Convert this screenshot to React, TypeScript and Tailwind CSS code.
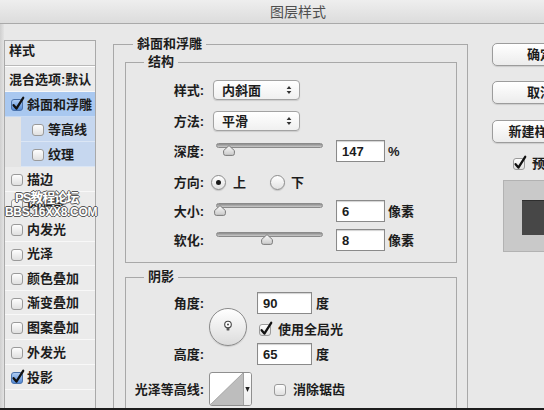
import React from 'react';

type Effect = {
  label: string;
  h: string;
  checked?: boolean;
  selected?: boolean;
  sub?: boolean;
};

const effects: Effect[] = [
  { label: '斜面和浮雕', h: 'h-[25px]', checked: true, selected: true },
  { label: '等高线', h: 'h-[25px]', sub: true },
  { label: '纹理', h: 'h-[25px]', sub: true },
  { label: '描边', h: 'h-[25px]' },
  { label: '内阴影', h: 'h-[25px]' },
  { label: '内发光', h: 'h-[25px]' },
  { label: '光泽', h: 'h-[24px]' },
  { label: '颜色叠加', h: 'h-[25px]' },
  { label: '渐变叠加', h: 'h-[24px]' },
  { label: '图案叠加', h: 'h-[25px]' },
  { label: '外发光', h: 'h-[25px]' },
  { label: '投影', h: 'h-[25px]', checked: true },
];

function Check({ checked = false, blue = false }: { checked?: boolean; blue?: boolean }) {
  return (
    <svg width="16" height="16" viewBox="0 0 16 16" className="shrink-0 overflow-visible">
      <defs>
        <linearGradient id="cb-plain" x1="0" y1="0" x2="0" y2="1">
          <stop offset="0" stopColor="#ffffff" />
          <stop offset="1" stopColor="#dedede" />
        </linearGradient>
        <linearGradient id="cb-blue" x1="0" y1="0" x2="0" y2="1">
          <stop offset="0" stopColor="#b3d0f5" />
          <stop offset="1" stopColor="#4f86d4" />
        </linearGradient>
      </defs>
      <rect
        x="1.5"
        y="3.5"
        width="11"
        height="11"
        rx="2.5"
        fill={blue ? 'url(#cb-blue)' : 'url(#cb-plain)'}
        stroke={blue ? '#4a72ab' : '#9a9a9a'}
      />
      {checked && (
        <path
          d="M3.6 9.2 L6.4 12.6 L13.2 1.8"
          fill="none"
          stroke="#111"
          strokeWidth="2.3"
          strokeLinecap="round"
          strokeLinejoin="round"
        />
      )}
    </svg>
  );
}

function Radio({ on = false }: { on?: boolean }) {
  return (
    <span className="flex h-[15px] w-[15px] shrink-0 items-center justify-center rounded-full border border-[#8c8c8c] bg-linear-to-b from-white to-[#e2e2e2] shadow-[0_1px_1px_rgba(0,0,0,0.15)]">
      {on && <span className="h-[5px] w-[5px] rounded-full bg-[#1a1a1a]" />}
    </span>
  );
}

function Select({ value }: { value: string }) {
  return (
    <div className="ml-[4px] flex h-[20px] w-[87px] items-center justify-between rounded-[4px] border border-[#a3a3a3] bg-linear-to-b from-white to-[#f0f0f0] pl-[8px] pr-[7px] shadow-[0_1px_1px_rgba(0,0,0,0.12)]">
      <span className="font-bold">{value}</span>
      <svg width="6" height="10" viewBox="0 0 6 10">
        <path d="M0.6 4 L3 1 L5.4 4 Z M0.6 6 L3 9 L5.4 6 Z" fill="#333" />
      </svg>
    </div>
  );
}

function Slider({ at }: { at: number }) {
  return (
    <div className="relative ml-[4px] h-[22px] w-[123px] shrink-0">
      <div className="absolute left-[3px] top-[3px] h-[5px] w-[107px] rounded-full border border-[#8a8a8a] bg-linear-to-b from-[#8c8c8c] to-[#cbcbcb]" />
      <svg className="absolute top-[5px]" style={{ left: at }} width="12" height="11" viewBox="0 0 12 11">
        <defs>
          <linearGradient id="thumb" x1="0" y1="0" x2="0" y2="1">
            <stop offset="0" stopColor="#fbfbfb" />
            <stop offset="1" stopColor="#c9c9c9" />
          </linearGradient>
        </defs>
        <path
          d="M6 0.6 L11.4 5.6 V8.6 Q11.4 10.4 9.6 10.4 H2.4 Q0.6 10.4 0.6 8.6 V5.6 Z"
          fill="url(#thumb)"
          stroke="#6f6f6f"
          strokeWidth="0.9"
        />
      </svg>
    </div>
  );
}

function NumBox({ value, wide = false }: { value: string; wide?: boolean }) {
  return (
    <div
      className={`flex h-[22px] shrink-0 items-center border border-[#8a8a8a] bg-white pl-[5px] font-bold shadow-[inset_0_1px_1px_rgba(0,0,0,0.18)] ${
        wide ? 'w-[55px]' : 'w-[49px]'
      }`}
    >
      {value}
    </div>
  );
}

function Label({ children }: { children: React.ReactNode }) {
  return <div className="w-[83px] shrink-0 pr-[5px] text-right font-bold">{children}</div>;
}

function SliderRow({ label, at, value, unit, className }: { label: string; at: number; value: string; unit: string; className: string }) {
  return (
    <div className={`flex h-[22px] items-center ${className}`}>
      <Label>{label}</Label>
      <Slider at={at} />
      <NumBox value={value} />
      <span className="ml-[3px] font-bold">{unit}</span>
    </div>
  );
}

function AngleDial() {
  return (
    <div className="mt-[16px] flex h-[38px] w-[38px] shrink-0 items-center justify-center rounded-full border border-[#8a8a8a] bg-linear-to-b from-white to-[#dcdcdc] shadow-[0_1px_1px_rgba(0,0,0,0.12)]">
      <svg width="10" height="12" viewBox="0 0 10 12" className="-mt-[2px]">
        <circle cx="5" cy="4.5" r="3.3" fill="#fff" stroke="#444" strokeWidth="1.1" />
        <circle cx="5" cy="4.5" r="1" fill="#444" />
        <rect x="3.6" y="7.6" width="2.8" height="3" rx="0.6" fill="#555" />
      </svg>
    </div>
  );
}

function Contour() {
  return (
    <div className="flex h-[34px] w-[43px] shrink-0 overflow-hidden rounded-[3px] border border-[#8f8f8f] bg-white">
      <svg width="33" height="32" viewBox="0 0 33 32" className="block shrink-0">
        <path d="M0 32 L33 0 V32 Z" fill="#bdbdbd" />
        <path d="M0 32 L33 0" stroke="#9a9a9a" strokeWidth="0.8" />
      </svg>
      <div className="flex flex-1 items-center justify-center border-l border-[#a0a0a0] bg-linear-to-b from-white to-[#ececec]">
        <svg width="5" height="7" viewBox="0 0 5 7">
          <path d="M0.3 1 H4.7 L2.5 6 Z" fill="#222" />
        </svg>
      </div>
    </div>
  );
}

function StylePanel() {
  return (
    <div className="mt-[16px] h-[400px] w-[92px] shrink-0 border border-[#a9a9a9] bg-[#ebebeb]">
      <div className="h-[25px] border-b border-[#b9b9b9] pl-[4px] pt-[3px] font-bold">样式</div>
      <div className="flex h-[26px] items-center border-b border-[#f8f8f8] border-t border-t-white pl-[4px] font-bold">
        混合选项:默认
      </div>
      {effects.map((e) =>
        e.sub ? (
          <div key={e.label} className={`flex ${e.h}`}>
            <div className="w-[16px] shrink-0 bg-[#e4e4e4]" />
            <div className="flex flex-1 items-center border-b border-[#dbe6f5] bg-[#c6d7ef] pl-[10px] font-bold">
              <Check />
              <span className="ml-[1px]">{e.label}</span>
            </div>
          </div>
        ) : (
          <div
            key={e.label}
            className={`flex items-center border-b pl-[5px] font-bold ${e.h} ${
              e.selected ? 'border-[#c9dbf3] bg-[#a9c8f0]' : 'border-[#f8f8f8]'
            }`}
          >
            <Check checked={e.checked} blue={e.checked} />
            <span className="ml-[1px]">{e.label}</span>
          </div>
        )
      )}
    </div>
  );
}

function BevelSection() {
  return (
    <fieldset className="ml-[17px] mt-[13px] h-[420px] w-[355px] shrink-0 border border-[#a8a8a8] p-0">
      <legend className="ml-[19px] px-[4px] font-bold leading-[14px]">斜面和浮雕</legend>
      <div className="pl-[11px]">
        <fieldset className="mt-[4px] w-[332px] border border-[#a8a8a8] p-0">
          <legend className="ml-[18px] px-[4px] font-bold leading-[14px]">结构</legend>
          <div className="pb-[11px] pt-[11px]">
            <div className="flex h-[20px] items-center">
              <Label>样式:</Label>
              <Select value="内斜面" />
            </div>
            <div className="mt-[11px] flex h-[20px] items-center">
              <Label>方法:</Label>
              <Select value="平滑" />
            </div>
            <SliderRow className="mt-[9px]" label="深度:" at={10} value="147" unit="%" />
            <div className="mt-[10px] flex h-[20px] items-center font-bold">
              <Label>方向:</Label>
              <span className="ml-[2px]">
                <Radio on />
              </span>
              <span className="ml-[7px]">上</span>
              <span className="ml-[24px]">
                <Radio />
              </span>
              <span className="ml-[6px]">下</span>
            </div>
            <SliderRow className="mt-[8px]" label="大小:" at={1} value="6" unit="像素" />
            <SliderRow className="mt-[7px]" label="软化:" at={48} value="8" unit="像素" />
          </div>
        </fieldset>

        <fieldset className="mt-[7px] h-[200px] w-[332px] border border-[#a8a8a8] p-0">
          <legend className="ml-[18px] px-[4px] font-bold leading-[14px]">阴影</legend>
          <div className="flex pt-[8px]">
            <div className="w-[83px] shrink-0 pr-[5px] font-bold">
              <div className="flex h-[22px] items-center justify-end">角度:</div>
              <div className="mt-[29px] flex h-[22px] items-center justify-end">高度:</div>
            </div>
            <AngleDial />
            <div className="ml-[10px] font-bold">
              <div className="flex items-center">
                <NumBox value="90" wide />
                <span className="ml-[4px]">度</span>
              </div>
              <div className="mt-[7px] flex h-[16px] items-center">
                <span className="ml-[1px]">
                  <Check checked />
                </span>
                <span className="ml-[4px]">使用全局光</span>
              </div>
              <div className="mt-[6px] flex items-center">
                <NumBox value="65" wide />
                <span className="ml-[4px]">度</span>
              </div>
            </div>
          </div>
          <div className="mt-[7px] flex items-center">
            <Label>光泽等高线:</Label>
            <Contour />
            <div className="ml-[21px] flex items-center font-bold">
              <Check />
              <span className="ml-[4px]">消除锯齿</span>
            </div>
          </div>
        </fieldset>
      </div>
    </fieldset>
  );
}

function ActionColumn() {
  const btn =
    'flex h-[23px] w-[96px] items-center justify-center rounded-[5px] border border-[#9c9c9c] bg-linear-to-b from-white to-[#ececec] font-bold shadow-[0_1px_1px_rgba(0,0,0,0.12)]';
  return (
    <div className="ml-[24px] w-[110px] shrink-0">
      <div className={`mt-[19px] ${btn}`}>确定</div>
      <div className={`mt-[15px] ${btn}`}>取消</div>
      <div className={`mt-[16px] ${btn}`}>新建样式...</div>
      <div className="ml-[20px] mt-[12px] flex items-center font-bold">
        <Check checked />
        <span className="ml-[4px]">预览</span>
      </div>
      <div className="ml-[11px] mt-[9px] h-[72px] w-[90px] border border-[#b2b2b2] bg-[#c9c9c9] pl-[18px] pt-[19px]">
        <div className="h-[35px] w-[50px] border-t border-[#2e2e2e] bg-[#474747]" />
      </div>
    </div>
  );
}

export default function App() {
  return (
    <div className="relative flex h-[410px] w-[544px] flex-col overflow-hidden border-b-2 border-[#1c1c1c] bg-[#e8e8e8] font-['Liberation_Sans','Noto_Sans_CJK_SC',sans-serif] text-[13px] leading-none text-[#1c1c1c]">
      {/* Title bar */}
      <div className="flex h-[24px] shrink-0 items-center border-b border-[#a9a9a9] bg-linear-to-b from-[#eeeeee] to-[#dcdcdc] pl-[270px] text-[14px] text-[#4e4e4e]">
        图层样式
      </div>

      {/* Body */}
      <div className="flex min-h-0 flex-1 overflow-hidden">
        <div className="w-[4px] shrink-0 bg-linear-to-r from-[#cfcfcf] to-[#e3e3e3]" />
        <StylePanel />
        <BevelSection />
        <ActionColumn />
      </div>

      {/* Watermark */}
      <div className="absolute left-[5px] top-[191px] font-bold text-white [text-shadow:1px_0_#555,-1px_0_#555,0_1px_#555,0_-1px_#555]">
        <div className="ml-[10px] text-[13px] tracking-[-1px]">PS教程论坛</div>
        <div className="mt-[2px] text-[12px] tracking-[-0.3px]">BBS.16XX8.COM</div>
      </div>
    </div>
  );
}
